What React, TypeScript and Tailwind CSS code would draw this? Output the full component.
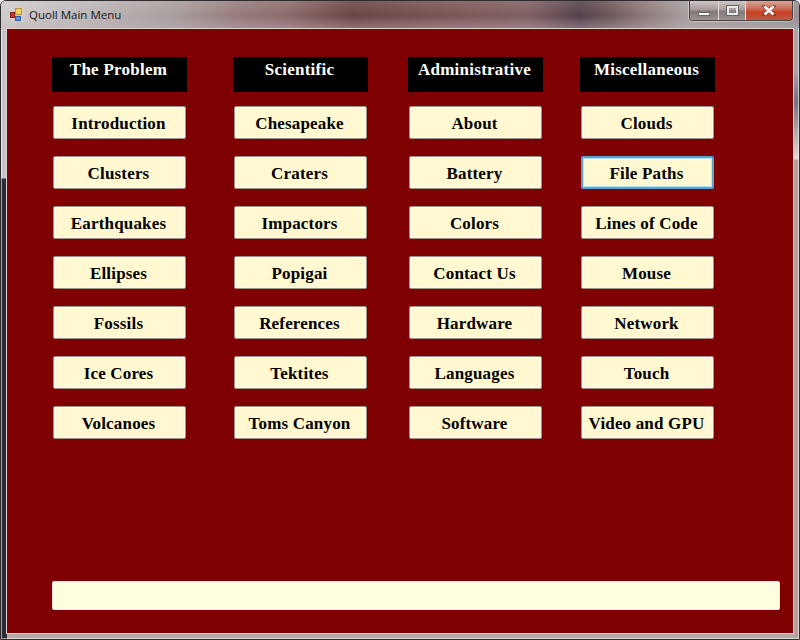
const columns = [
  { title: "The Problem", items: ["Introduction", "Clusters", "Earthquakes", "Ellipses", "Fossils", "Ice Cores", "Volcanoes"] },
  { title: "Scientific", items: ["Chesapeake", "Craters", "Impactors", "Popigai", "References", "Tektites", "Toms Canyon"] },
  { title: "Administrative", items: ["About", "Battery", "Colors", "Contact Us", "Hardware", "Languages", "Software"] },
  { title: "Miscellaneous", items: ["Clouds", "File Paths", "Lines of Code", "Mouse", "Network", "Touch", "Video and GPU"] },
];

const AppIcon = () => (
  <svg width="16" height="16" viewBox="0 0 16 16" className="shrink-0">
    <rect x="0.5" y="0.5" width="15" height="15" fill="#d8d4d4" opacity="0.45" />
    <rect x="1.5" y="5.5" width="4" height="5" fill="#d8342a" stroke="#8a1f18" />
    <rect x="6.5" y="1.5" width="6" height="6" fill="#f8d458" stroke="#c0922a" />
    <rect x="6.5" y="9.5" width="5" height="4" fill="#5a92dc" stroke="#2f62ac" />
  </svg>
);

const CloseGlyph = () => (
  <svg width="14" height="11" viewBox="0 0 14 11">
    <path d="M2 1 L12 10 M12 1 L2 10" stroke="#5a2a20" strokeWidth="4" strokeLinecap="square" opacity="0.45" />
    <path d="M2.5 1.5 L11.5 9.5 M11.5 1.5 L2.5 9.5" stroke="#ffffff" strokeWidth="2.6" />
  </svg>
);

const App = () => {
  return (
    <div className="w-[800px] h-[640px] overflow-hidden flex flex-col rounded-t-[6px] border border-[#2e2c30] shadow-[inset_0_0_0_1px_rgba(255,255,255,0.55)] font-['Liberation_Serif',serif] [background:linear-gradient(180deg,#c6c4c6_0,#c6c4c6_177px,#2a2c38_178px,#2a2c38_100%)_left/6px_100%_no-repeat,linear-gradient(180deg,#a8a4a8_0,#a8a4a8_70px,#70747a_100px,#c0b8b8_140px,#ead8d8_158px,#b4a09c_159px,#b4a09c_100%)_right/6px_100%_no-repeat,#bba7a4]">
      <div className="h-[27px] flex items-center pl-[8px] [background:linear-gradient(180deg,rgba(255,255,255,0.12)_0,rgba(255,255,255,0)_55%,rgba(190,180,190,0.4)_100%),linear-gradient(90deg,#d0cccc_0%,#bcb4b4_12%,#a89c9c_22%,#957a7a_30%,#8b6a6a_36%,#6a4444_44%,#7a5555_56%,#806062_66%,#54404a_72.5%,#6b5557_76%,#8a7474_80%,#a8a0a0_86%,#989092_100%)]">
        <AppIcon />
        <span className="ml-[4px] text-[11.5px] text-[#141414] font-['Open_Sans',sans-serif]">Quoll Main Menu</span>
        <div className="ml-auto mr-[6px] self-start flex h-[20px] rounded-b-[4px] border border-t-0 border-[#4a4446] shadow-[0_0_0_1px_rgba(255,255,255,0.35)] overflow-hidden">
          <div className="w-[29px] flex items-center justify-center bg-[linear-gradient(180deg,#cfc6c6,#a89c9c_45%,#857a7a_55%,#9a9090)] border-r border-[#e5dcdc]">
            <div className="w-[12px] h-[4px] mt-[6px] bg-white border border-[#666]" />
          </div>
          <div className="w-[27px] flex items-center justify-center bg-[linear-gradient(180deg,#cfc6c6,#a89c9c_45%,#857a7a_55%,#9a9090)] border-r border-[#e5dcdc]">
            <div className="w-[11px] h-[9px] border-2 border-[#e8e8e8] outline outline-[#666] mt-[-1px]" />
          </div>
          <div className="w-[46px] flex items-center justify-center bg-[linear-gradient(180deg,#d8a498,#c87058_40%,#cc4020_60%,#b85a48)]">
            <CloseGlyph />
          </div>
        </div>
      </div>
      <div className="mx-[5px] mb-[5px] flex-1 flex flex-col bg-[#7f0000] border border-[#dcd4d4]">
        <div className="flex flex-1 pl-[45px] pt-[28px]">
          {columns.map((col, i) => (
            <div
              key={col.title}
              className={
                i === 0 ? "w-[135px] mr-[46px]" : i === 1 ? "w-[135px] mr-[40px]" : i === 2 ? "w-[135px] mr-[37px]" : "w-[135px]"
              }
            >
              <div className="h-[35px] pr-[2px] bg-black text-white font-bold text-[17px] tracking-[0.25px] leading-[25px] text-center">{col.title}</div>
              <div className="mt-[14px] flex flex-col gap-[17px]">
                {col.items.map((item) => (
                  <button
                    key={item}
                    className={
                      item === "File Paths"
                        ? "mx-px h-[33px] pr-[2px] pt-[2px] rounded-[2px] bg-[#fff8d0] text-black font-bold text-[17px] tracking-[0.17px] border-2 border-[#5aa2cc] shadow-[inset_0_0_0_1px_#b8e4f4]"
                        : "mx-px h-[33px] pr-[2px] pt-[2px] rounded-[2px] bg-[#fff8d0] text-black font-bold text-[17px] tracking-[0.17px] border border-[#9c9292] shadow-[inset_0_0_0_1px_#fffdf0]"
                    }
                  >
                    {item}
                  </button>
                ))}
              </div>
            </div>
          ))}
        </div>
        <div className="ml-[45px] mr-[13px] mb-[23px] h-[29px] rounded-[2px] bg-[#ffffe0] border border-[#f0e0e0]" />
      </div>
    </div>
  );
};

export default App;
